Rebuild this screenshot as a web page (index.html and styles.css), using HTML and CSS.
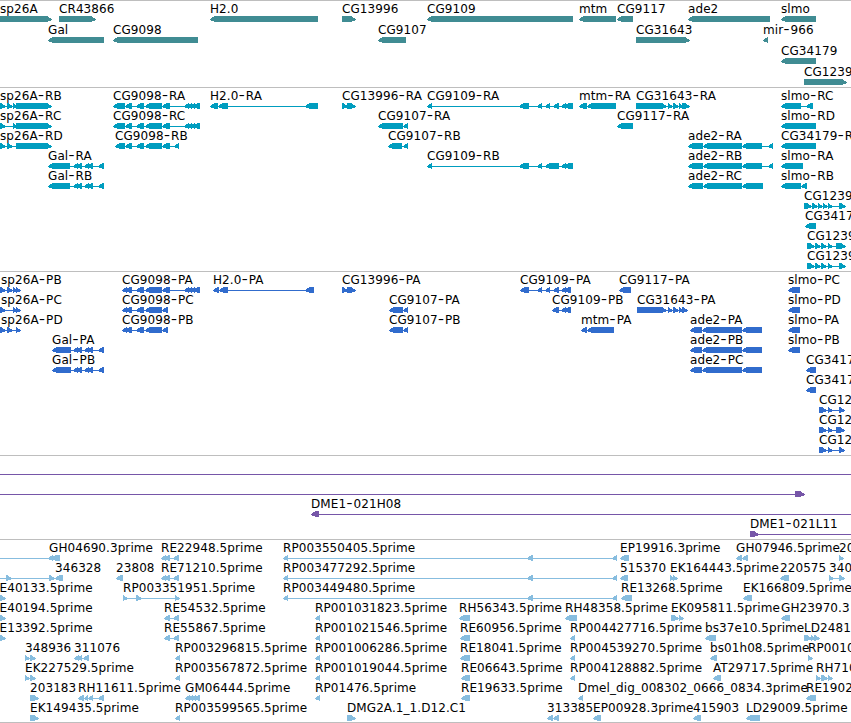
FILE: index.html
```
<!DOCTYPE html>
<html lang="en">
<head>
    <meta charset="UTF-8">
    <title>Genome Browser</title>
    <link rel="stylesheet" href="styles.css">
</head>
<body>
    <main class="browser">
        <svg class="track gene" id="gene"></svg>
        <svg class="track mrna" id="mrna"></svg>
        <svg class="track cds" id="cds"></svg>
        <svg class="track bac" id="bac"></svg>
        <svg class="track est" id="est"></svg>
    </main>
    <script src="tracks.js"></script>
</body>
</html>
```
FILE: styles.css
```
body {
    margin: 0;
    background-color: #fff;
    overflow: hidden;
}
.browser {
    display: flex;
    flex-direction: column;
    height: 722px;
    border-bottom: 1px solid #bebebe;
}
.track {
    display: block;
    box-sizing: border-box;
    width: 100%;
    border-top: 1px solid #bebebe;
    overflow: hidden;
    font-family: "DejaVu Sans", sans-serif;
    font-size: 12px;
    letter-spacing: 0.08px;
}
.track text {
    fill: #000;
    white-space: pre;
}
.track path {
    shape-rendering: crispEdges;
}
.track .dash {
    font-family: Inter, sans-serif;
    font-size: 14px;
    letter-spacing: 0.9px;
}
.gene {
    height: 87px;
}
.mrna {
    height: 184px;
}
.cds {
    height: 184px;
}
.bac {
    height: 84px;
}
.est {
    height: 183px;
}
.gene path {
    fill: #408c93;
}
.mrna path {
    fill: #009dbf;
}
.cds path {
    fill: #316ccd;
}
.bac path {
    fill: #7656a8;
}
.est path {
    fill: #87bddf;
}
```
FILE: tracks.js
```
// feature: [row, label, strand, exons, label x (defaults to the first exon)]
const tracks = {
    gene: [
        [0, "sp26A", ">", "-9-52", 0],
        [0, "CR43866", ">", "59-96"],
        [0, "H2.0", "<", "210-318"],
        [0, "CG13996", ">", "342-356"],
        [0, "CG9109", "<", "427-573"],
        [0, "mtm", "<", "579-616"],
        [0, "CG9117", "<", "617-633"],
        [0, "ade2", "<", "688-770"],
        [0, "slmo", "<", "781-816"],
        [1, "Gal", "<", "48-104"],
        [1, "CG9098", "<", "113-198"],
        [1, "CG9107", "<", "378-406"],
        [1, "CG31643", ">", "636-690"],
        [1, "mir-966", "<", "763-768"],
        [2, "CG34179", "<", "781-816"],
        [3, "CG1239", ">", "804-847"]
    ],
    mrna: [
        [0, "sp26A-RB", ">", "-4-6 7-13 13-18 16-52", 0],
        [0, "CG9098-RA", "<", "113-125 125-132 136-144 145-162 162-170 184-189 187-192 190-195 193-200"],
        [0, "H2.0-RA", "<", "210-218 218-228 305-318"],
        [0, "CG13996-RA", ">", "342-348 347-356"],
        [0, "CG9109-RA", "<", "427-432 519-529 537-542 545-550 553-559 561-566 564-573"],
        [0, "mtm-RA", "<", "579-587 587-616"],
        [0, "CG31643-RA", ">", "636-667 668-673 673-679 679-684 682-690"],
        [0, "slmo-RC", "<", "781-801 806-813"],
        [1, "sp26A-RC", ">", "-4-6 13-18 16-52", 0],
        [1, "CG9098-RC", "<", "113-125 125-132 136-144 145-162 162-170 184-189 187-192 190-195 193-200"],
        [1, "CG9107-RA", "<", "378-403 403-408"],
        [1, "CG9117-RA", "<", "617-633"],
        [1, "slmo-RD", "<", "781-816"],
        [2, "sp26A-RD", ">", "-4-6 7-13 16-52", 0],
        [2, "CG9098-RB", "<", "115-125 125-132 136-144 145-162 162-170 174-179"],
        [2, "CG9107-RB", "<", "388-402 403-408"],
        [2, "ade2-RA", "<", "688-703 703-742 742-762 768-773"],
        [2, "CG34179-R", "<", "781-816"],
        [3, "Gal-RA", "<", "48-70 73-78 76-82 84-89 87-93 98-104"],
        [3, "CG9109-RB", "<", "427-432 519-529 537-542 545-559 561-566 564-573"],
        [3, "ade2-RB", "<", "688-703 703-742 742-762 768-773"],
        [3, "slmo-RA", "<", "781-803"],
        [4, "Gal-RB", "<", "48-70 73-78 76-82 84-89 87-93 98-104"],
        [4, "ade2-RC", "<", "688-703 703-742 742-763"],
        [4, "slmo-RB", "<", "781-801 801-807"],
        [5, "CG1239", ">", "804-812 812-818 818-823 823-828 828-833 839-846"],
        [6, "CG3417", "<", "805-816"],
        [7, "CG1239", ">", "807-815 815-821 821-827 828-833 836-846"],
        [8, "CG1239", ">", "807-815 815-821 821-827 828-833 839-846"]
    ],
    cds: [
        [0, "sp26A-PB", ">", "-4-6 7-13 13-18 16-21", 1],
        [0, "CG9098-PA", "<", "122-127 125-132 136-144 145-162 162-170 184-189 187-192 190-195 193-200"],
        [0, "H2.0-PA", "<", "213-219 219-228 305-314"],
        [0, "CG13996-PA", ">", "342-348 347-356"],
        [0, "CG9109-PA", "<", "520-529 537-542 545-550 553-559 561-566 564-571"],
        [0, "CG9117-PA", "<", "619-631"],
        [0, "slmo-PC", "<", "788-800"],
        [1, "sp26A-PC", ">", "-4-6 13-18 16-21", 1],
        [1, "CG9098-PC", "<", "122-127 125-132 136-144 145-162 162-168"],
        [1, "CG9107-PA", "<", "389-403 403-408"],
        [1, "CG9109-PB", "<", "552-559 561-566 564-571"],
        [1, "CG31643-PA", ">", "637-667 668-673 673-679 679-684 682-688"],
        [1, "slmo-PD", "<", "788-800"],
        [2, "sp26A-PD", ">", "-4-6 7-13 16-21", 1],
        [2, "CG9098-PB", "<", "122-127 125-132 136-144 145-162 162-168"],
        [2, "CG9107-PB", "<", "389-403 403-408"],
        [2, "mtm-PA", "<", "581-587 587-614"],
        [2, "ade2-PA", "<", "690-702 702-742 742-762"],
        [2, "slmo-PA", "<", "788-800"],
        [3, "Gal-PA", "<", "52-71 73-78 76-82 84-89 87-93 98-104"],
        [3, "ade2-PB", "<", "690-702 702-742 742-762"],
        [3, "slmo-PB", "<", "788-800"],
        [4, "Gal-PB", "<", "52-71 73-78 76-82 84-89 87-93 98-104"],
        [4, "ade2-PC", "<", "690-702 702-742 742-762"],
        [4, "CG3417", "<", "806-816"],
        [5, "CG3417", "<", "806-816"],
        [6, "CG12", ">", "819-827 828-833 839-845"],
        [7, "CG12", ">", "819-827 828-833 836-845"],
        [8, "CG12", ">", "819-827 828-833 839-845"]
    ],
    bac: [
        [0, "", ">", "-20--10 870-880"],
        [1, "", ">", "-20--10 795-805"],
        [2, "DME1-021H08", "<", "311-319 870-880"],
        [3, "DME1-021L11", ">", "750-759 870-880"]
    ],
    est: [
        [0, "GH04690.3prime", "<", "-20--10 48-53 51-60", 49],
        [0, "RE22948.5prime", "<", "161-166 164-170 173-179"],
        [0, "RP003550405.5prime", "<", "283-288 527-533 612-617"],
        [0, "EP19916.3prime", "<", "620-629"],
        [0, "GH07946.5prime", "<", "736-742 742-748"],
        [0, "20", ">", "839-844"],
        [1, "", ">", "-20--10 6-12 49-55"],
        [1, "346328", "<", "55-63"],
        [1, "23808", "<", "116-123"],
        [1, "RE71210.5prime", "<", "161-166 164-170 173-179"],
        [1, "RP003477292.5prime", "<", "283-288 527-533 612-617"],
        [1, "515370", "<", "620-628"],
        [1, "EK164443.5prime", ">", "670-675 673-678"],
        [1, "220575", "<", "780-789"],
        [1, "340", ">", "829-834 839-845"],
        [2, "E40133.5prime", ">", "-3-6", -0.5],
        [2, "RP003351951.5prime", ">", "123-128 136-142 175-180"],
        [2, "RP003449480.5prime", "<", "283-288 527-533 612-617"],
        [2, "RE13268.5prime", "<", "621-632"],
        [2, "EK166809.5prime", "<", "743-752"],
        [3, "E40194.5prime", ">", "-3-6", -0.5],
        [3, "RE54532.5prime", "<", "164-170 173-179"],
        [3, "RP001031823.5prime", "<", "315-320"],
        [3, "RH56343.5prime", "<", "459-470"],
        [3, "RH48358.5prime", "<", "565-577"],
        [3, "EK095811.5prime", ">", "671-679 679-684"],
        [3, "GH23970.3", "<", "781-790"],
        [4, "E13392.5prime", ">", "-3-6", -0.5],
        [4, "RE55867.5prime", "<", "164-170 173-179"],
        [4, "RP001021546.5prime", "<", "315-320"],
        [4, "RE60956.5prime", "<", "460-470"],
        [4, "RP004427716.5prime", "<", "570-575"],
        [4, "bs37e10.5prime", "<", "705-716"],
        [4, "LD2481", ">", "804-812 811-816 814-820"],
        [5, "348936", ">", "25-30 30-36"],
        [5, "311076", "<", "74-79 77-82 83-89"],
        [5, "RP003296815.5prime", "<", "175-180"],
        [5, "RP001006286.5prime", "<", "315-320"],
        [5, "RE18041.5prime", "<", "460-470"],
        [5, "RP004539270.5prime", "<", "570-575"],
        [5, "bs01h08.5prime", "<", "710-717"],
        [5, "RP0010", ">", "808-813"],
        [6, "EK227529.5prime", ">", "25-30 30-36"],
        [6, "RP003567872.5prime", "<", "175-180"],
        [6, "RP001019044.5prime", "<", "315-320"],
        [6, "RE06643.5prime", "<", "461-470"],
        [6, "RP004128882.5prime", "<", "570-575"],
        [6, "AT29717.5prime", "<", "713-721"],
        [6, "RH710", ">", "816-821 821-828 828-833"],
        [7, "203183", ">", "30-39"],
        [7, "RH11611.5prime", "<", "78-84 84-88 88-93 98-104"],
        [7, "GM06444.5prime", "<", "185-190 188-193 191-196 194-200"],
        [7, "RP01476.5prime", "<", "315-320"],
        [7, "RE19633.5prime", "<", "461-470"],
        [7, "Dmel_dig_008302_0666_0834.3prime", "<", "578-583"],
        [7, "RE1902", "<", "806-816"],
        [8, "EK149435.5prime", ">", "30-39"],
        [8, "RP003599565.5prime", "<", "175-180"],
        [8, "DMG2A.1_1.D12.C1", ">", "347-356"],
        [8, "313385", "<", "547-553 553-559"],
        [8, "EP00928.3prime", "<", "593-601"],
        [8, "415903", "<", "693-701"],
        [8, "LD29009.5prime", "<", "746-760"]
    ]
};

// exon with an arrow head of up to 5px on the strand side, always drawn clockwise
function exonPath(start, end, y, strand) {
    const head = Math.min(5, end - start);
    if (strand === "<") {
        return `M${start} ${y + 3}L${start + head} ${y}H${end}V${y + 6}H${start + head}L${start} ${y + 4}Z`;
    }
    return `M${start} ${y}H${end - head}L${end} ${y + 3}V${y + 4}L${end - head} ${y + 6}H${start}Z`;
}

for (const id in tracks) {
    const pitch = id === "gene" ? 21 : 20;
    let out = "";
    for (const [row, label, strand, exons, labelX] of tracks[id]) {
        const y = 15 + row * pitch; // below the 1px border
        const parts = exons.split(" ").map(e => e.match(/^(-?\d+)-(-?\d+)$/).slice(1).map(Number));
        const first = parts[0][0];
        const last = parts[parts.length - 1][1];
        let d = `M${first + 2} ${y + 3}H${last - 2}V${y + 4}H${first + 2}Z`;
        for (const [start, end] of parts) {
            d += exonPath(start, end, y, strand);
        }
        out += `<path d="${d}"/>`;
        const x = labelX === undefined ? first : labelX;
        if (label) {
            out += `<text x="${x}" y="${y - 3}">${label.replace("-", '<tspan class="dash">-</tspan>')}</text>`;
        }
    }
    document.getElementById(id).innerHTML = out;
}
```
